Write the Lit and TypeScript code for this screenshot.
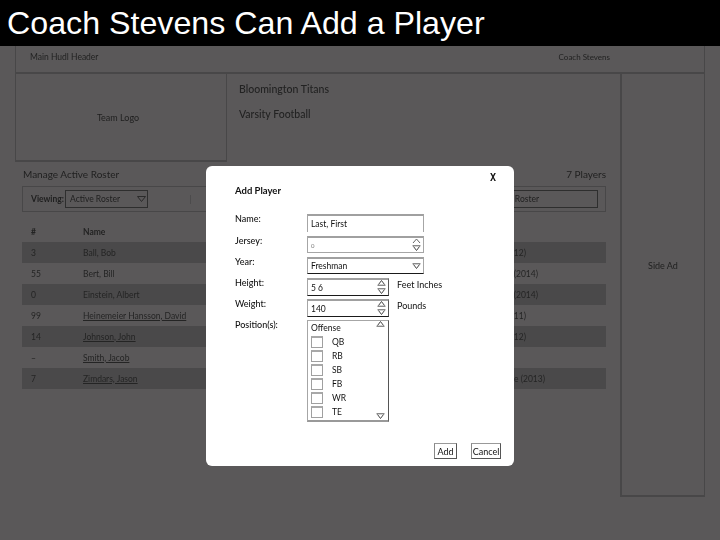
import { LitElement, html, css, svg } from "lit";
import { customElement } from "lit/decorators.js";

const rows = [
  ["3", "Ball, Bob", "Sophomore (2012)", false, 80],
  ["55", "Bert, Bill", "Junior Varsity (2014)", false, 68],
  ["0", "Einstein, Albert", "Junior Varsity (2014)", false, 68],
  ["99", "Heinemeier Hansson, David", "Senior (2011)", true, 80],
  ["14", "Johnson, John", "Sophomore (2012)", true, 80],
  ["–", "Smith, Jacob", "", true, 80],
  ["7", "Zimdars, Jason", "Freshman Varsity Lane (2013)", true, 61],
] as const;

const down = svg`<svg class="ic" width="9" height="6" viewBox="0 0 9 6"><path d="M0.5 0.7H8.5" stroke="#8a8a8a" stroke-width="1.4"/><path d="M1.5 1.5L4.5 5.5L7.5 1.5" fill="none" stroke="#444" stroke-width="1"/></svg>`;
const up = svg`<svg class="ic" width="9" height="6" viewBox="0 0 9 6"><path d="M0.5 5.3H8.5" stroke="#8a8a8a" stroke-width="1.4"/><path d="M1.5 4.5L4.5 0.5L7.5 4.5" fill="none" stroke="#444" stroke-width="1"/></svg>`;
const chevron = svg`<svg class="ic" width="9" height="6" viewBox="0 0 9 6"><path d="M1 5L4.5 1L8 5" fill="none" stroke="#666" stroke-width="1"/></svg>`;
const pageDown = svg`<svg class="ic" width="9" height="6" viewBox="0 0 9 6"><path d="M0.5 0.5H8.5L4.5 5.5Z" fill="none" stroke="#2a2a2a" stroke-width="1"/></svg>`;

@customElement("app-root")
export class AppRoot extends LitElement {
  static styles = css`
    :host { display: block; width: 720px; height: 540px; overflow: hidden; position: relative; background: #5a5859; font-family: Lato, "Liberation Sans", sans-serif; color: #1f1f1f; }
    .title { height: 46px; background: #000; color: #fff; font: 32.2px/46px "Liberation Sans", sans-serif; padding-left: 7px; white-space: nowrap; box-sizing: border-box; }
    .page { width: 690px; margin-left: 15px; font-size: 8.5px; filter: blur(0.3px); }
    .hud { height: 28px; box-sizing: border-box; border: 1px solid #484748; border-width: 0 1px 2px 1px; display: flex; justify-content: space-between; align-items: center; padding: 0 94px 4px 14px; color: #222; }
    .coach { font-size: 8px; }
    .main { display: flex; align-items: flex-start; }
    .left { width: 595px; flex: none; }
    .top { display: flex; height: 88px; }
    .logo { width: 212px; box-sizing: border-box; border: 1px solid #484748; border-width: 0 1px 2px 1px; display: flex; align-items: center; justify-content: center; padding-right: 6px; font-size: 9px; }
    .team { padding: 10px 0 0 12px; font-size: 10.5px; color: #222; display: flex; flex-direction: column; gap: 15px; font-weight: 500; }
    .team span { line-height: 10px; }
    .manage { display: flex; justify-content: space-between; padding: 6px 4px 0 8px; height: 18px; box-sizing: border-box; font-size: 10px; line-height: 12px; }
    .bar { margin: 6px 0 0 7px; width: 584px; height: 26px; box-sizing: border-box; border: 1px solid #484748; display: flex; align-items: center; padding-left: 8px; gap: 1px; font-weight: 700; }
    .sel { width: 83px; height: 18px; box-sizing: border-box; border: 1px solid #2e2e2e; display: flex; align-items: center; justify-content: space-between; padding: 0 1px 0 4px; font-weight: 400; }
    .tick { width: 1px; height: 9px; background: #4c4b4c; margin-left: 41px; }
    .report { margin-left: auto; margin-right: 7px; width: 90px; height: 18px; box-sizing: border-box; border: 1px solid #2e2e2e; display: flex; align-items: center; justify-content: flex-end; padding-right: 58px; white-space: nowrap; font-weight: 400; }
    .thead, .row { display: grid; grid-template-columns: 52px 300px 1fr; margin-left: 7px; width: 584px; padding-left: 9px; box-sizing: border-box; align-items: center; }
    .thead { height: 21px; margin-top: 9px; font-weight: 700; color: #222; }
    .row { height: 21px; color: #242424; }
    .row.dark { background: #4a494a; }
    .row u { text-underline-offset: 1px; }
    .stat { text-align: right; white-space: nowrap; }
    .ad { margin-left: 10px; width: 85px; height: 423px; box-sizing: border-box; border: 1px solid #484748; border-width: 0 1px 2px 2px; display: flex; align-items: center; justify-content: center; font-size: 9px; padding-bottom: 38px; }

    .modal { position: absolute; left: 206px; top: 166px; width: 308px; height: 300px; background: #fff; border-radius: 6px; box-sizing: border-box; padding: 19px 13px 0 29px; color: #111; font-size: 8.5px; filter: blur(0.25px); }
    .x { position: absolute; left: 284px; top: 6px; font: 700 10px/12px "DejaVu Sans Mono", monospace; color: #111; }
    .head { font-size: 9.5px; line-height: 12px; font-weight: 700; }
    .form { display: grid; grid-template-columns: 72px 1fr; margin-top: 17px; }
    .lab { font-size: 9px; line-height: 10px; font-weight: 500; }
    .field { box-sizing: border-box; border: 1px solid #a6a6a6; border-top: 2px solid #a0a0a0; display: flex; align-items: center; justify-content: space-between; padding: 0 2px 0 3px; margin-bottom: 4px; white-space: nowrap; }
    .w117 { width: 117px; }
    .w82 { width: 82px; margin: 0; }
    .h18 { height: 18px; }
    .h17 { height: 17px; }
    .open-b { border-bottom: none; }
    .dark-b { border-bottom: 1px solid #1a1a1a; }
    .dark-r { border-right: 1px solid #555; }
    .spin { display: flex; flex-direction: column; justify-content: space-between; height: 100%; padding: 0 0 1px; box-sizing: border-box; }
    .ic { display: block; }
    .faint { color: #777; font-size: 6px; }
    .with { display: flex; gap: 8px; height: 21px; }
    .with span.u { font-size: 9px; line-height: 14px; }
    .list { box-sizing: border-box; width: 82px; height: 102px; border: 1px solid #a6a6a6; border-right: 1px solid #555; border-bottom: 2px solid #999; padding: 2px 0 0 3px; position: relative; }
    .list .sb { position: absolute; right: 3px; top: 0; bottom: 1px; display: flex; flex-direction: column; justify-content: space-between; }
    .off { line-height: 10px; }
    .opts { display: flex; flex-direction: column; gap: 2px; margin-top: 3px; }
    .opt { display: flex; align-items: center; gap: 9px; height: 12px; }
    .box { width: 12px; height: 12px; box-sizing: border-box; border: 1px solid #a0a0a0; border-top: 2px solid #a8a8a8; }
    .btns { position: absolute; top: 277px; left: 228px; display: flex; gap: 14px; }
    .btn { height: 16px; box-sizing: border-box; border: 1px solid #555; border-top-color: #999; border-left-color: #888; display: flex; align-items: center; justify-content: center; font-size: 9px; }
    .add { width: 23px; }
    .cancel { width: 30px; }
  `;

  render() {
    return html`
      <div class="title">Coach Stevens Can Add a Player</div>
      <div class="page">
        <div class="hud"><span>Main Hudl Header</span><span class="coach">Coach Stevens</span></div>
        <div class="main">
          <div class="left">
            <div class="top">
              <div class="logo">Team Logo</div>
              <div class="team"><span>Bloomington Titans</span><span>Varsity Football</span></div>
            </div>
            <div class="manage"><span>Manage Active Roster</span><span>7 Players</span></div>
            <div class="bar">
              <span>Viewing:</span>
              <div class="sel">Active Roster ${pageDown}</div>
              <div class="tick"></div>
              <div class="report">Add to Roster</div>
            </div>
            <div class="thead"><span>#</span><span>Name</span><span></span></div>
            ${rows.map(
              (r, i) => html`<div class="row ${i % 2 === 0 ? "dark" : ""}">
                <span>${r[0]}</span>
                <span>${r[3] ? html`<u>${r[1]}</u>` : r[1]}</span>
                <span class="stat" style="padding-right:${r[4]}px">${r[2]}</span>
              </div>`
            )}
          </div>
          <div class="ad">Side Ad</div>
        </div>
      </div>
      <div class="modal">
        <div class="x">X</div>
        <div class="head">Add Player</div>
        <div class="form">
          <div class="lab">Name:</div>
          <div class="field w117 h18 open-b">Last, First</div>
          <div class="lab">Jersey:</div>
          <div class="field w117 h17"><span class="faint">0</span><div class="spin">${chevron}${down}</div></div>
          <div class="lab">Year:</div>
          <div class="field w117 h17 dark-b">Freshman ${down}</div>
          <div class="lab">Height:</div>
          <div class="with"><div class="field w82 h18 dark-b dark-r"><span>5 6</span><div class="spin">${up}${down}</div></div><span class="u">Feet Inches</span></div>
          <div class="lab">Weight:</div>
          <div class="with"><div class="field w82 h18 dark-b dark-r"><span>140</span><div class="spin">${up}${down}</div></div><span class="u">Pounds</span></div>
          <div class="lab">Position(s):</div>
          <div class="list">
            <div class="off">Offense</div>
            <div class="opts">
              ${["QB", "RB", "SB", "FB", "WR", "TE"].map(
                (p) => html`<div class="opt"><div class="box"></div><span>${p}</span></div>`
              )}
            </div>
            <div class="sb">${up}${down}</div>
          </div>
        </div>
        <div class="btns">
          <div class="btn add">Add</div>
          <div class="btn cancel">Cancel</div>
        </div>
      </div>
    `;
  }
}
